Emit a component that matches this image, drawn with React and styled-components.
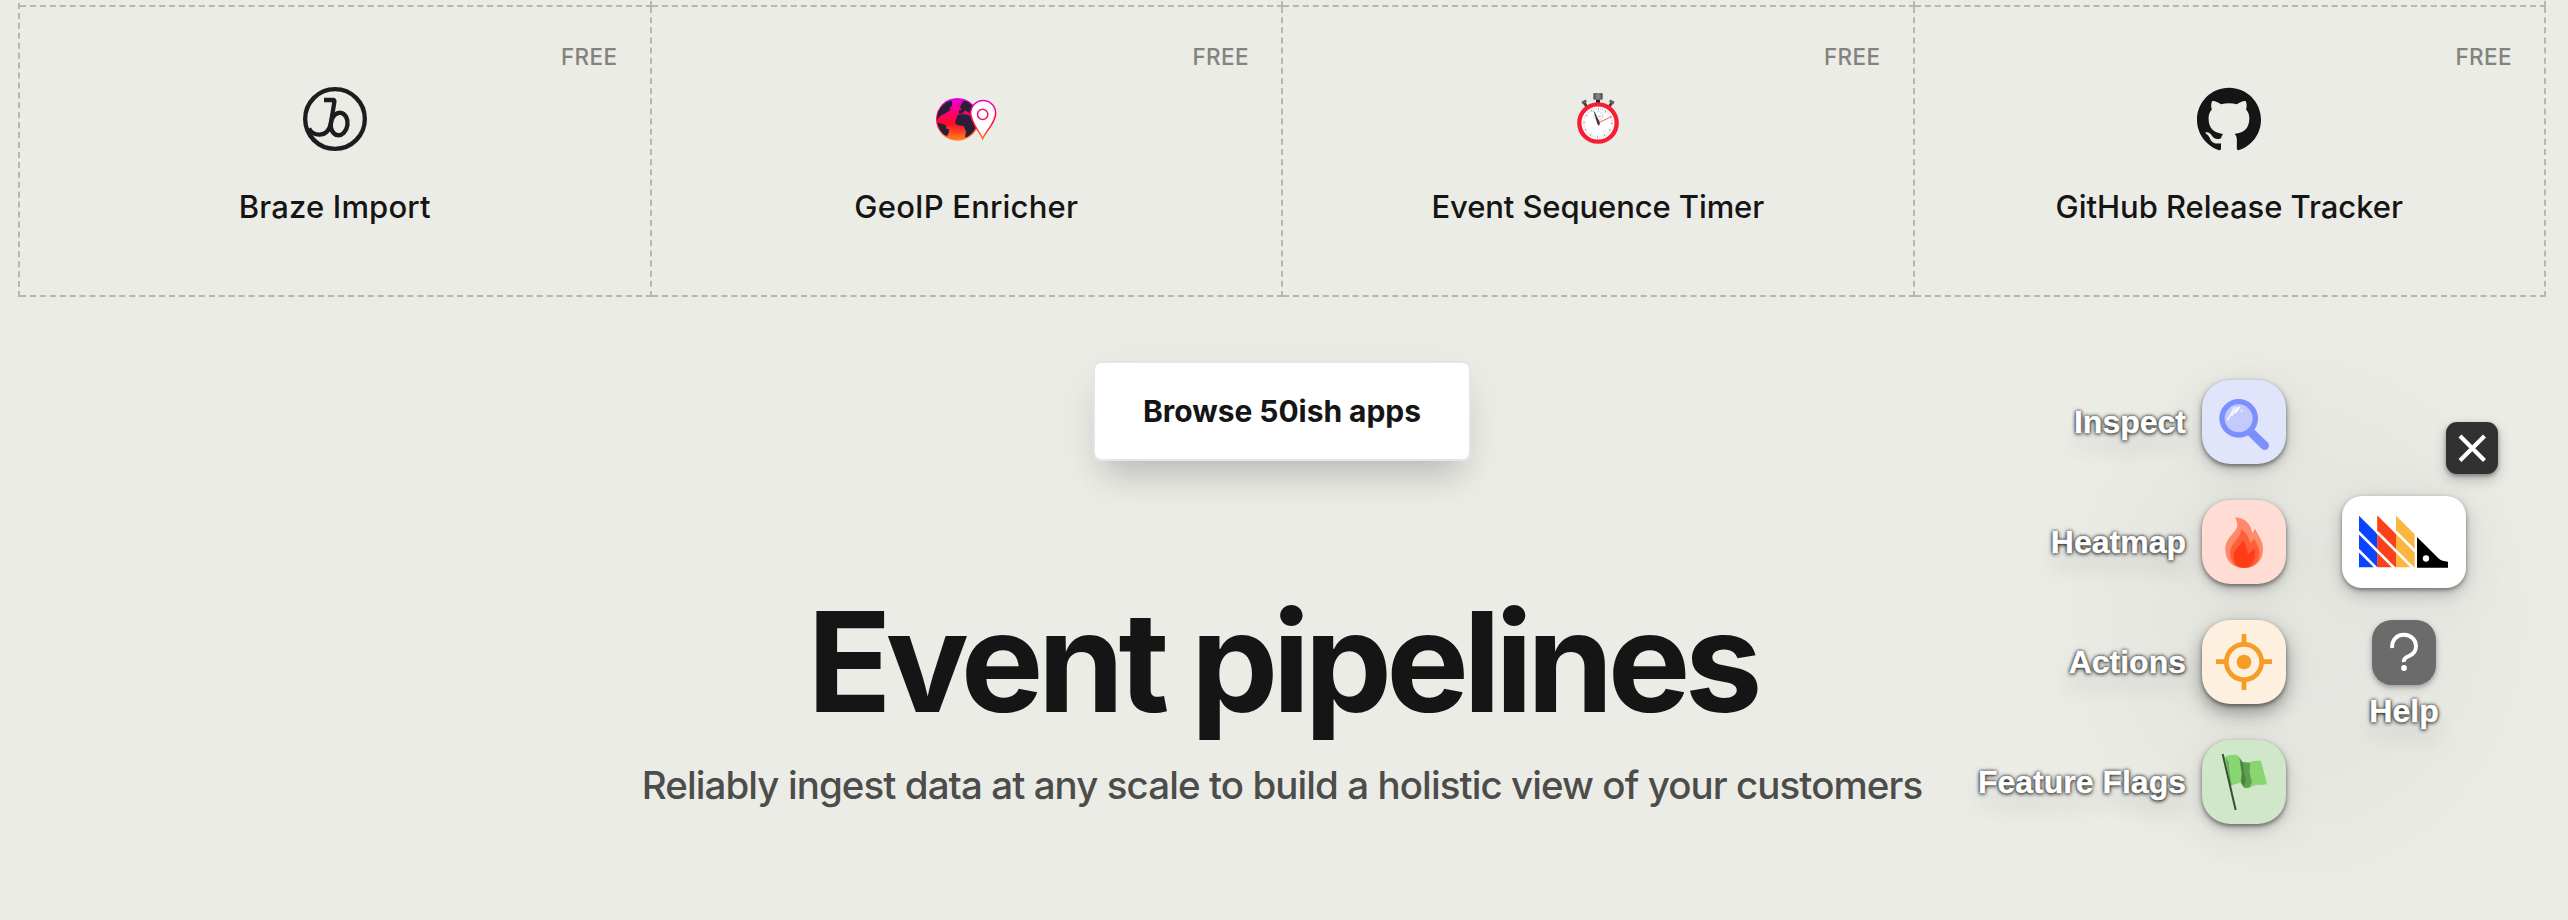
import React from "react";
import styled, { createGlobalStyle } from "styled-components";
import { SiGithub } from "react-icons/si";

const GlobalStyle = createGlobalStyle`
  *, *::before, *::after { box-sizing: border-box; }
  body { margin: 0; background: #ebece6; color: #151515; font-family: Inter, "Liberation Sans", sans-serif; }
`;

const Page = styled.main`
  position: relative;
  height: 920px;
  padding: 0 22px 0 18px;
  overflow: hidden;
  display: flex;
  flex-direction: column;
  align-items: center;
  background: #ebece6;
`;

const AppGridClip = styled.section`
  width: 100%;
  height: 297px;
  overflow: hidden;
  display: flex;
  align-items: flex-end;
`;

const AppGrid = styled.div`
  flex: 1;
  display: grid;
  grid-template-columns: repeat(4, 1fr);
  grid-auto-rows: 290px;
  border: 2px dashed #b5b7b0;
  border-width: 2px 0 0 2px;
`;

const AppCell = styled.article`
  display: flex;
  flex-direction: column;
  align-items: center;
  padding-top: 38px;
  border: 2px dashed #b5b7b0;
  border-width: 0 2px 2px 0;
`;

const Price = styled.span`
  align-self: flex-end;
  margin-right: 32px;
  line-height: 24px;
  font-size: 22.5px;
  font-weight: 500;
  letter-spacing: 0.4px;
  color: #82837f;
`;

const AppIcon = styled.div`
  width: 64px;
  height: 64px;
  margin-top: 18px;
  svg { display: block; width: 64px; height: 64px; }
`;

const AppName = styled.h3`
  margin: 36px 0 0;
  line-height: 40px;
  font-size: 31px;
  font-weight: 500;
  letter-spacing: ${(p) => p.$tracking}px;
  white-space: nowrap;
`;

const BrowseButton = styled.button`
  width: 378px;
  height: 100px;
  margin: 64px 0 0;
  padding: 0;
  border: 2px solid #e5e5e7;
  border-radius: 8px;
  background: #fff;
  background-clip: padding-box;
  box-shadow: 0 24px 32px -12px rgba(0, 0, 0, 0.17), 0 14px 50px rgba(0, 0, 0, 0.06);
  color: #151515;
  font: 700 30px Inter, sans-serif;
  letter-spacing: -0.05px;
`;

const Heading = styled.h2`
  margin: 129px 0 0;
  line-height: 144px;
  font-size: 139px;
  font-weight: 700;
  letter-spacing: -5.8px;
  white-space: nowrap;
`;

const Subheading = styled.p`
  margin: 23px 0 0;
  line-height: 56px;
  font-size: 38.5px;
  font-weight: 500;
  letter-spacing: -0.93px;
  color: #4c4d4a;
  white-space: nowrap;
`;

const Toolbar = styled.aside`
  position: absolute;
  top: 380px;
  right: 70px;
  display: flex;
  align-items: flex-start;
  gap: 56px;
  font-family: "Liberation Sans", Arial, sans-serif;
  &::before {
    content: "";
    position: absolute;
    inset: -60px -60px -90px 60px;
    background: radial-gradient(closest-side, rgba(0, 0, 0, 0.028), rgba(0, 0, 0, 0.018) 60%, transparent);
  }
`;

const ToolList = styled.div`
  position: relative;
  display: flex;
  flex-direction: column;
  gap: 36px;
`;

const Tool = styled.div`
  display: flex;
  justify-content: flex-end;
  align-items: center;
  gap: 16px;
`;

const ToolLabel = styled.span`
  line-height: 36px;
  font-size: 32px;
  font-weight: 700;
  color: #fff;
  -webkit-text-stroke: 0.5px #fff;
  text-shadow: 0 0 2px #000, 0 1px 4px rgba(0, 0, 0, 0.75), 0 0 4px rgba(0, 0, 0, 0.5), 0 16px 24px rgba(0, 0, 0, 0.14);
`;

const ToolTile = styled.div`
  width: 84px;
  height: 84px;
  border-radius: 28px;
  background: ${(p) => p.$color};
  box-shadow: 0 2px 4px rgba(0, 0, 0, 0.45), 0 ${(p) => (p.$raised ? "8px 18px" : "5px 12px")} rgba(0, 0, 0, ${(p) => (p.$raised ? 0.35 : 0.2)}), 0 8px 44px rgba(0, 0, 0, 0.07);
  svg { display: block; width: 84px; height: 84px; }
`;

const SideColumn = styled.div`
  position: relative;
  width: 156px;
  padding-top: 42px;
  display: flex;
  flex-direction: column;
  align-items: flex-start;
`;

const CloseTile = styled.div`
  align-self: flex-end;
  width: 52px;
  height: 52px;
  border-radius: 11px;
  background: #313131;
  box-shadow: 0 2px 4px rgba(0, 0, 0, 0.35), 0 6px 14px rgba(0, 0, 0, 0.2);
  svg { display: block; }
`;

const LogoTile = styled.div`
  width: 124px;
  height: 92px;
  margin-top: 22px;
  border-radius: 20px;
  background: #fff;
  box-shadow: 0 2px 4px rgba(0, 0, 0, 0.4), 0 6px 16px rgba(0, 0, 0, 0.2), 0 6px 60px rgba(0, 0, 0, 0.05);
  svg { display: block; }
`;

const HelpGroup = styled.div`
  width: 124px;
  margin-top: 32px;
  display: flex;
  flex-direction: column;
  align-items: center;
  gap: 8px;
`;

const HelpTile = styled.div`
  width: 64px;
  height: 65px;
  border-radius: 20px;
  background: #6b6b6b;
  box-shadow: 0 2px 4px rgba(0, 0, 0, 0.25), 0 4px 10px rgba(0, 0, 0, 0.12);
  svg { display: block; }
`;

const BrazeIcon = () => (
  <svg viewBox="39 36 192 192" fill="none" stroke="#1d1d1f" strokeWidth="13">
    <circle cx="135" cy="132" r="89.5" />
    <path d="M102 75 H129 Q134 75 133 81 L123 143 Q116 179 88 179 Q66 179 57 160" />
    <ellipse cx="147.500" cy="147" rx="25" ry="34" transform="rotate(8 147.500 147)" />
  </svg>
);

const GeoIcon = () => (
  <svg viewBox="222 51 192 192">
    <defs>
      <linearGradient id="geo" x1="0" y1="84" x2="0" y2="213" gradientUnits="userSpaceOnUse">
        <stop offset="0" stopColor="#e000e0" />
        <stop offset="0.35" stopColor="#ff0070" />
        <stop offset="0.6" stopColor="#ff0a28" />
        <stop offset="1" stopColor="#ff8a1c" />
      </linearGradient>
      <clipPath id="globe"><circle cx="292" cy="148" r="61" /></clipPath>
    </defs>
    <circle cx="292" cy="148" r="64" fill="url(#geo)" />
    <g fill="#282038" clipPath="url(#globe)">
      <path d="M230 150 L232 125 L246 106 L258 96 L276 92 L276 107 L269 113 L271 120 L254 131 L244 136 Z" />
      <path d="M232 158 L246 161 L258 166 L259 176 L267 178 L266 189 L262 197 L252 196 L238 180 Z" />
      <path d="M304 104 L309 94 L324 92 L346 110 L346 128 L328 130 L316 121 L306 131 L296 131 L297 121 L305 119 L300 111 Z" />
      <path d="M285 156 L293 135 L309 132 L328 136 L345 150 L349 172 L336 190 L322 202 L315 202 L318 185 L311 168 L290 165 Z" />
    </g>
    <path d="M368 206 C359 183 332 160 332 129 A37 37 0 0 1 407 129 C407 160 377 183 368 206 Z" fill="#fff" stroke="url(#geo)" strokeWidth="4.500" />
    <circle cx="368" cy="133" r="15.500" fill="#fff" stroke="#f0146a" strokeWidth="4.500" />
  </svg>
);

const TimerIcon = () => (
  <svg viewBox="498 51 192 192">
    <defs>
      <linearGradient id="metal"><stop stopColor="#4a4a4a" /><stop offset="0.5" stopColor="#8b8b8b" /><stop offset="1" stopColor="#4a4a4a" /></linearGradient>
    </defs>
    <rect x="588" y="84" width="12" height="16" fill="#282828" />
    <rect x="580" y="69" width="28" height="20" rx="3" fill="url(#metal)" />
    <path d="M552 98 L560 109 M636 98 L628 109" stroke="#444" strokeWidth="9" />
    <path d="M546 99 L559 92 M629 92 L642 99" stroke="#606060" strokeWidth="8" />
    <circle cx="594" cy="159" r="56" fill="#fff" stroke="#f71e33" strokeWidth="13" />
    <circle cx="594" cy="159" r="43" fill="none" stroke="#a3a3a3" strokeWidth="6" strokeDasharray="1 4.630" />
    <circle cx="594" cy="159" r="41" fill="none" stroke="#6c6c6c" strokeWidth="7" strokeDasharray="1.500 19.968" />
    <circle cx="595" cy="138" r="13" fill="none" stroke="#bbb" strokeWidth="2" />
    <path d="M595 139 H603" stroke="#888" strokeWidth="2" />
    <path d="M580 120 L587 132 L600 158 L597 168 L592 161 Z" fill="#333" />
    <path d="M596 158 L635 140" stroke="#ee4054" strokeWidth="2.500" />
  </svg>
);

const InspectIcon = () => (
  <svg viewBox="726 60 252 252">
    <path d="M872 216 L914 257" stroke="#7b8ffd" strokeWidth="26" strokeLinecap="round" />
    <circle cx="836" cy="175" r="50" fill="#c4cafd" stroke="#7b8ffd" strokeWidth="16" />
    <path d="M803 180 L824 142 M816 166 L832 142 M827 158 L839 141 M844 153 L846 151" stroke="#fff" strokeWidth="4" strokeLinecap="round" />
  </svg>
);

const FlameIcon = () => (
  <svg viewBox="726 420 252 252">
    <path d="M825 472 C855 473 873 493 877 520 L886 506 C892 528 909 535 909 567 C909 602 888 624 852 624 C816 624 796 602 796 567 C796 528 838 516 831 490 Q830 480 825 472 Z" fill="#ff8a6b" />
    <path d="M843 506 C858 517 867 531 871 550 L884 536 C888 552 899 560 899 580 C899 608 880 624 853 624 C826 624 810 606 810 578 C810 550 844 536 843 506 Z" fill="#ff5e38" />
    <path d="M848 540 C858 552 862 568 863 584 L885 564 C887 596 880 623 852 623 C829 623 820 606 821 586 C823 565 842 559 848 540 Z" fill="#ff3c17" />
  </svg>
);

const TargetIcon = () => (
  <svg viewBox="726 60 252 252" fill="none" stroke="#f79d25" strokeWidth="14">
    <circle cx="852" cy="186" r="53" />
    <circle cx="852" cy="186" r="22" fill="#f79d25" stroke="none" />
    <path d="M852 102 V128 M852 244 V270 M768 185 H794 M910 185 H936" />
  </svg>
);

const FlagIcon = () => (
  <svg viewBox="726 420 252 252">
    <path d="M795 470 C812 464 830 461 838 471 L849 487 C865 490 885 480 903 482 L921 553 L902 555 C885 550 870 568 856 565 C846 560 846 546 837 549 L812 557 Z" fill="#88d572" />
    <path d="M838 471 L843 485 L870 489 L869 519 L876 546 L869 562 L853 564 L842 542 L844 520 Z" fill="#5f9f50" />
    <path d="M849 488 L852 520 L858 540 L851 561 L844 549 L847 520 L839 476 Z" fill="#4b833e" />
    <path d="M796 471 L806 485 L809 520 L815 556 L811 557 Z" fill="#67ad56" />
    <path d="M788 462 L827 630" stroke="#35502f" strokeWidth="6" />
  </svg>
);

const HedgehogLogo = () => (
  <svg viewBox="66 288 372 276" width="124" height="92">
    <path d="M117 347 L172 402 V502 H117 Z" fill="#0b44ff" />
    <path d="M171.500 346 L228 402 V502 H171.500 Z" fill="#fb401a" />
    <path d="M228 347 L284 403 V502 H228 Z" fill="#fcb53f" />
    <path d="M115 396 L224 505 M115 450 L170 505 M171 396 L280 505 M228 396 L286 454" stroke="#fff" strokeWidth="8" />
    <path d="M291 411 L355 475 Q366 485 384 485 V503 H291 Z" fill="#000" />
    <circle cx="318" cy="475.500" r="9.500" fill="#fff" />
  </svg>
);

const CloseIcon = () => (
  <svg viewBox="0 0 52 52" width="52" height="52" stroke="#fff" strokeWidth="4.200">
    <path d="M14 14 L38.500 38.500 M38.500 14 L14 38.500" />
  </svg>
);

const QuestionIcon = () => (
  <svg viewBox="0 0 64 64" width="64" height="64" fill="none" stroke="#fff" strokeWidth="3.900">
    <path d="M20.200 28 C19.500 20 25 14.800 32 14.800 C39 14.800 44 20 44 26 C44 31 41.500 34 37.500 35.800 C34 37 31.500 38.500 31.800 42" />
    <circle cx="32" cy="48" r="2.900" fill="#fff" stroke="none" />
  </svg>
);

const apps = [
  { name: "Braze Import", Icon: BrazeIcon, tracking: 0.15 },
  { name: "GeoIP Enricher", Icon: GeoIcon, tracking: 0.2 },
  { name: "Event Sequence Timer", Icon: TimerIcon, tracking: -0.1 },
  { name: "GitHub Release Tracker", Icon: SiGithub, tracking: -0.05 },
];

const tools = [
  { label: "Inspect", color: "#e1e5fb", Icon: InspectIcon },
  { label: "Heatmap", color: "#ffddd4", Icon: FlameIcon },
  { label: "Actions", color: "#fef0df", Icon: TargetIcon, raised: true },
  { label: "Feature Flags", color: "#d0e8c9", Icon: FlagIcon },
];

export default function App() {
  return (
    <Page>
      <GlobalStyle />
      <AppGridClip>
        <AppGrid>
          {[0, 1, 2, 3].map((n) => <AppCell key={n} aria-hidden="true" />)}
          {apps.map(({ name, Icon, tracking }) => (
            <AppCell key={name}>
              <Price>FREE</Price>
              <AppIcon><Icon /></AppIcon>
              <AppName $tracking={tracking}>{name}</AppName>
            </AppCell>
          ))}
        </AppGrid>
      </AppGridClip>
      <BrowseButton>Browse 50ish apps</BrowseButton>
      <Heading>Event pipelines</Heading>
      <Subheading>Reliably ingest data at any scale to build a holistic view of your customers</Subheading>
      <Toolbar>
        <ToolList>
          {tools.map(({ label, color, Icon, raised }) => (
            <Tool key={label}>
              <ToolLabel>{label}</ToolLabel>
              <ToolTile $color={color} $raised={raised}><Icon /></ToolTile>
            </Tool>
          ))}
        </ToolList>
        <SideColumn>
          <CloseTile><CloseIcon /></CloseTile>
          <LogoTile><HedgehogLogo /></LogoTile>
          <HelpGroup>
            <HelpTile><QuestionIcon /></HelpTile>
            <ToolLabel>Help</ToolLabel>
          </HelpGroup>
        </SideColumn>
      </Toolbar>
    </Page>
  );
}
